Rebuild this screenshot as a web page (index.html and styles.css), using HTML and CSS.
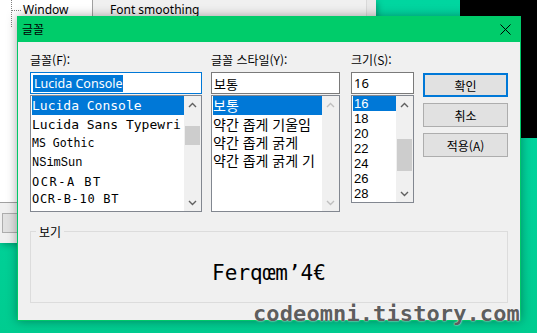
FILE: index.html
```html
<!DOCTYPE html>
<html lang="ko">
<head>
<meta charset="utf-8">
<title>글꼴</title>
<link rel="stylesheet" href="styles.css">
</head>
<body>
<div class="desktop">
  <div class="bgwin">
    <div class="bg-left">
      <div class="tree">
        <div class="tree-item">Window</div>
      </div>
      <div class="bg-btnrow"><div class="bg-btn"></div></div>
    </div>
    <div class="bg-pane">
      <div class="bg-label">Font smoothing</div>
    </div>
    <div class="bg-edge"></div>
  </div>
  <div class="blackzone"></div>

  <div class="dialog">
    <div class="titlebar">
      <span class="title">글꼴</span>
      <span class="close">
        <svg width="11" height="11" viewBox="0 0 11 11"><path d="M0.5 0.5 L10.5 10.5 M10.5 0.5 L0.5 10.5" stroke="#000" stroke-width="1" fill="none"/></svg>
      </span>
    </div>
    <div class="body">
      <div class="cols">
        <div class="col col-font">
          <div class="label">글꼴(F):</div>
          <div class="input input-focus"><span class="sel-text">Lucida Console</span></div>
          <div class="list list-tall">
            <div class="items">
              <div class="item f-lucida selected">Lucida Console</div>
              <div class="item f-lucida">Lucida Sans Typewri</div>
              <div class="item f-msgothic">MS Gothic</div>
              <div class="item f-nsimsun">NSimSun</div>
              <div class="item f-ocra">OCR-A BT</div>
              <div class="item f-ocrb">OCR-B-10 BT</div>
            </div>
            <div class="vscroll">
              <div class="arrow"><svg width="9" height="6" viewBox="0 0 9 6"><path d="M1 5 L4.5 1.5 L8 5" stroke="#606060" stroke-width="1.4" fill="none"/></svg></div>
              <div class="track"><div class="thumb thumb-font"></div></div>
              <div class="arrow"><svg width="9" height="6" viewBox="0 0 9 6"><path d="M1 1 L4.5 4.5 L8 1" stroke="#606060" stroke-width="1.4" fill="none"/></svg></div>
            </div>
          </div>
        </div>

        <div class="col col-style">
          <div class="label">글꼴 스타일(Y):</div>
          <div class="input"><span class="val-ko">보통</span></div>
          <div class="list list-tall">
            <div class="items">
              <div class="item ko r19 selected">보통</div>
              <div class="item ko r18">약간 좁게 기울임</div>
              <div class="item ko r18">약간 좁게 굵게</div>
              <div class="item ko r18">약간 좁게 굵게 기</div>
            </div>
            <div class="vscroll">
              <div class="arrow"><svg width="9" height="6" viewBox="0 0 9 6"><path d="M1 5 L4.5 1.5 L8 5" stroke="#BFBFBF" stroke-width="1.4" fill="none"/></svg></div>
              <div class="track"></div>
              <div class="arrow"><svg width="9" height="6" viewBox="0 0 9 6"><path d="M1 1 L4.5 4.5 L8 1" stroke="#BFBFBF" stroke-width="1.4" fill="none"/></svg></div>
            </div>
          </div>
        </div>

        <div class="col col-size">
          <div class="label">크기(S):</div>
          <div class="input"><span class="val-num">16</span></div>
          <div class="list list-short">
            <div class="items">
              <div class="item num selected">16</div>
              <div class="item num">18</div>
              <div class="item num">20</div>
              <div class="item num">22</div>
              <div class="item num">24</div>
              <div class="item num">26</div>
              <div class="item num">28</div>
            </div>
            <div class="vscroll">
              <div class="arrow"><svg width="9" height="6" viewBox="0 0 9 6"><path d="M1 5 L4.5 1.5 L8 5" stroke="#606060" stroke-width="1.4" fill="none"/></svg></div>
              <div class="track"><div class="thumb thumb-size"></div></div>
              <div class="arrow"><svg width="9" height="6" viewBox="0 0 9 6"><path d="M1 1 L4.5 4.5 L8 1" stroke="#606060" stroke-width="1.4" fill="none"/></svg></div>
            </div>
          </div>
        </div>

        <div class="col col-btns">
          <button class="btn btn-default">확인</button>
          <button class="btn">취소</button>
          <button class="btn">적용(A)</button>
        </div>
      </div>

      <fieldset class="group">
        <legend class="legend">보기</legend>
        <div class="sample">Ferqœm’4€</div>
      </fieldset>
    </div>
  </div>

  <div class="watermark">codeomni.tistory.com</div>
</div>
</body>
</html>
```

FILE: styles.css
```css
* { box-sizing: border-box; }

body {
  margin: 0;
  font-family: "Noto Sans CJK KR", "Noto Sans", sans-serif;
  font-size: 12px;
  color: #000;
}

.desktop {
  position: relative;
  width: 537px;
  height: 333px;
  overflow: hidden;
  background: linear-gradient(180deg, #00D6A0 0%, #00D29A 60%, #00CC90 100%);
}

/* background window */
.bgwin {
  position: absolute;
  left: 0;
  top: 0;
  width: 376px;
  height: 243px;
  background: #F0F0F0;
  display: flex;
  box-shadow: 2px 2px 6px rgba(0, 0, 0, 0.25);
}

.bg-left {
  width: 93px;
  display: flex;
  flex-direction: column;
}

.tree {
  height: 203px;
  background: #fff;
  border-right: 1px solid #A0A0A0;
  border-bottom: 1px solid #A0A0A0;
  position: relative;
}

.tree::before {
  content: "";
  position: absolute;
  left: 11px;
  top: 0;
  height: 27px;
  border-left: 1px dotted #808080;
}

.tree-item {
  position: relative;
  padding-left: 23px;
  height: 20px;
  line-height: 20px;
  font-family: "Noto Sans", sans-serif;
  font-size: 12px;
}

.tree-item::before {
  content: "";
  position: absolute;
  left: 12px;
  top: 10px;
  width: 9px;
  border-top: 1px dotted #808080;
}

.bg-btnrow {
  padding: 10px 0 0 2px;
}

.bg-btn {
  width: 60px;
  height: 20px;
  background: #E1E1E1;
  border: 1px solid #ADADAD;
}

.bg-pane {
  flex: 1;
  padding: 2px 0 0 17px;
  border-right: 1px solid #D9D9D9;
}

.bg-label {
  font-family: "Noto Sans", sans-serif;
  font-size: 12px;
  line-height: 16px;
}

.bg-edge {
  width: 9px;
  background: #E9E9E9;
}

.blackzone {
  position: absolute;
  left: 460px;
  top: 0;
  width: 77px;
  height: 138px;
  background: #000;
}

/* dialog */
.dialog {
  position: absolute;
  left: 17px;
  top: 16px;
  width: 504px;
  height: 305px;
  background: #F0F0F0;
  border: 1px solid #00C868;
  border-top: 0;
  box-shadow: 0 0 10px rgba(0, 0, 0, 0.35);
}

.titlebar {
  height: 26px;
  background: #00CC6A;
  display: flex;
  align-items: center;
  justify-content: space-between;
  padding-left: 4px;
}

.title {
  font-size: 12px;
  line-height: 14px;
}

.close {
  width: 30px;
  height: 26px;
  display: flex;
  align-items: center;
  justify-content: center;
  padding-top: 1px;
}

.body {
  padding: 11px 11px 0 12px;
}

.cols {
  display: flex;
  align-items: flex-start;
}

.col {
  display: flex;
  flex-direction: column;
}

.col-font { width: 172px; }
.col-style { width: 129px; margin-left: 9px; }
.col-size { width: 63px; margin-left: 11px; }
.col-btns { width: 85px; margin-left: 9px; padding-top: 20px; }

.label {
  height: 13px;
  line-height: 13px;
  font-size: 12px;
  margin-bottom: 6px;
  white-space: nowrap;
}

.input {
  height: 22px;
  background: #fff;
  border: 1px solid #7A7A7A;
  padding: 1px 0 0 2px;
  display: flex;
  align-items: center;
}

.input-focus {
  border-color: #0078D7;
}

.sel-text {
  background: #0078D7;
  color: #fff;
  font-family: "Noto Sans", sans-serif;
  font-size: 12.5px;
  line-height: 17px;
  padding: 0 1px;
  margin-top: -1px;
}

.val-ko {
  font-size: 13px;
  line-height: 17px;
}

.val-num {
  font-family: "Noto Sans", sans-serif;
  font-size: 13px;
  line-height: 17px;
}

.list {
  margin-top: 1px;
  background: #fff;
  border: 1px solid #828790;
  display: flex;
  overflow: hidden;
}

.list-tall { height: 117px; }
.list-short { height: 108px; }

.items {
  flex: 1;
  min-width: 0;
  padding-left: 1px;
  overflow: hidden;
}

.item {
  white-space: nowrap;
  overflow: hidden;
  display: flex;
  align-items: center;
}

.selected {
  background: #0078D7;
  color: #fff;
}

.f-lucida {
  height: 19px;
  line-height: 19px;
  font-family: "DejaVu Sans Mono", monospace;
  font-size: 13px;
}

.f-msgothic {
  height: 19px;
  line-height: 19px;
  font-family: "DejaVu Sans Mono", monospace;
  font-size: 11.5px;
}

.f-nsimsun {
  height: 20px;
  line-height: 20px;
  font-family: "Liberation Mono", monospace;
  font-size: 12px;
}

.f-ocra {
  height: 18px;
  line-height: 18px;
  font-family: "DejaVu Sans Mono", monospace;
  font-size: 12px;
  letter-spacing: 1.5px;
}

.f-ocrb {
  height: 16px;
  line-height: 16px;
  font-family: "DejaVu Sans Mono", monospace;
  font-size: 12px;
  letter-spacing: 0.7px;
}

.ko {
  font-family: "Noto Sans CJK KR", sans-serif;
  font-size: 14px;
}

.r19 { height: 19px; line-height: 19px; }
.r18 { height: 18px; line-height: 18px; }

.num {
  height: 15px;
  line-height: 15px;
  font-family: "Liberation Sans", "Noto Sans", sans-serif;
  font-size: 13px;
  padding-left: 1px;
}

.vscroll {
  width: 17px;
  flex: none;
  background: #F0F0F0;
  display: flex;
  flex-direction: column;
}

.arrow {
  height: 17px;
  display: flex;
  align-items: center;
  justify-content: center;
}

.track {
  flex: 1;
}

.thumb {
  background: #CDCDCD;
  margin: 0 1px;
}

.thumb-font { margin-top: 13px; height: 19px; }
.thumb-size { margin-top: 26px; height: 32px; }

.btn {
  display: block;
  width: 85px;
  height: 24px;
  margin: 0 0 6px 0;
  padding: 0;
  background: #E1E1E1;
  border: 1px solid #ADADAD;
  font-family: "Noto Sans CJK KR", sans-serif;
  font-size: 12px;
  color: #000;
}

.btn-default {
  border: 2px solid #0078D7;
}

.group {
  margin: 13px 0 0 0;
  padding: 0;
  width: 478px;
  border: 1px solid #DCDCDC;
}

.legend {
  margin-left: 5px;
  padding: 0 3px;
  font-size: 12px;
  line-height: 13px;
}

.sample {
  height: 64px;
  padding-top: 6px;
  display: flex;
  align-items: center;
  justify-content: center;
  font-family: "DejaVu Sans Mono", monospace;
  font-size: 21px;
}

.watermark {
  position: absolute;
  left: 253px;
  top: 302px;
  font-family: "DejaVu Sans Mono", monospace;
  font-weight: bold;
  font-size: 22px;
  line-height: 24px;
  letter-spacing: 0.1px;
  color: #5E5E5E;
  text-shadow: 0 0 2px rgba(255, 255, 255, 0.8), 0 0 1px rgba(255, 255, 255, 0.6);
  white-space: nowrap;
}
```
